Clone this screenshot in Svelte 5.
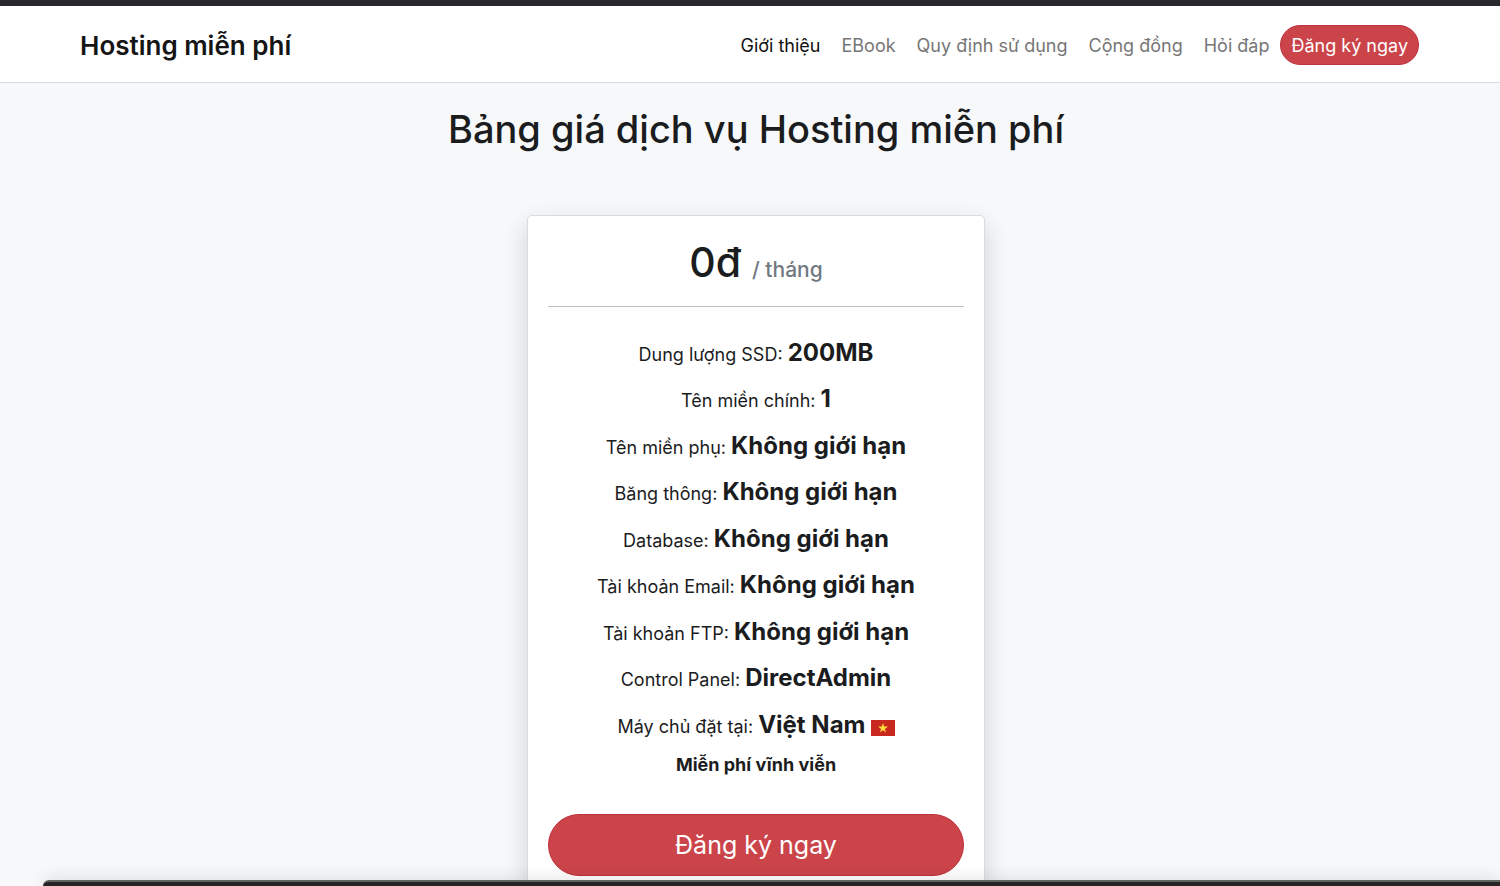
<script lang="ts">
  interface NavLink {
    label: string;
    href: string;
    active?: boolean;
  }

  interface Feature {
    label: string;
    value: string;
    flag?: boolean;
  }

  const links: NavLink[] = [
    { label: 'Giới thiệu', href: '#gioi-thieu', active: true },
    { label: 'EBook', href: '#ebook' },
    { label: 'Quy định sử dụng', href: '#quy-dinh' },
    { label: 'Cộng đồng', href: '#cong-dong' },
    { label: 'Hỏi đáp', href: '#hoi-dap' },
  ];

  const features: Feature[] = [
    { label: 'Dung lượng SSD', value: '200MB' },
    { label: 'Tên miền chính', value: '1' },
    { label: 'Tên miền phụ', value: 'Không giới hạn' },
    { label: 'Băng thông', value: 'Không giới hạn' },
    { label: 'Database', value: 'Không giới hạn' },
    { label: 'Tài khoản Email', value: 'Không giới hạn' },
    { label: 'Tài khoản FTP', value: 'Không giới hạn' },
    { label: 'Control Panel', value: 'DirectAdmin' },
    { label: 'Máy chủ đặt tại', value: 'Việt Nam', flag: true },
  ];
</script>

<div class="page">
  <header class="navbar">
    <a class="brand" href="#top">Hosting miễn phí</a>
    <nav class="nav">
      {#each links as link}
        <a class="nav-link" class:active={link.active} href={link.href}>{link.label}</a>
      {/each}
      <button class="btn">Đăng ký ngay</button>
    </nav>
  </header>

  <main class="pricing">
    <h1>Bảng giá dịch vụ Hosting miễn phí</h1>
    <section class="card">
      <h2 class="price">0đ <small>/ tháng</small></h2>
      <hr />
      <ul class="features">
        {#each features as f}
          <li>
            {f.label}: <strong>{f.value}</strong>
            {#if f.flag}
              <svg class="flag" viewBox="0 0 24 16" aria-hidden="true">
                <rect width="24" height="16" fill="#c8281e" />
                <path d="M12 3l1.2 3.6H17l-3.1 2.3 1.2 3.7-3.1-2.3-3.1 2.3 1.2-3.7L7 6.6h3.8z" fill="#ffd93b" />
              </svg>
            {/if}
          </li>
        {/each}
      </ul>
      <p class="forever">Miễn phí vĩnh viễn</p>
      <button class="btn btn-lg">Đăng ký ngay</button>
    </section>
  </main>

  <div class="dock"></div>
</div>

<style>
  :global(body) { margin: 0; }
  .page {
    box-sizing: border-box;
    height: 100vh;
    overflow: hidden;
    background: #f7f8fa;
    border-top: 6px solid #29282d;
    color: #1b1c1e;
    font-family: Inter, "Noto Sans", sans-serif;
    font-size: 18px;
  }
  .navbar {
    display: flex;
    align-items: center;
    justify-content: space-between;
    height: 74px;
    padding: 2px 81px 0 80px;
    background: #fff;
    border-bottom: 1px solid #d8dbdf;
  }
  .brand { color: #151515; font-size: 26px; font-weight: 600; text-decoration: none; }
  .nav { display: flex; align-items: center; }
  .nav-link { margin-right: 21px; color: #767676; text-decoration: none; }
  .nav-link.active { color: #111; }
  .nav-link:last-of-type { margin-right: 11px; }
  .btn {
    height: 40px;
    padding: 0 10px;
    background: #cb444a;
    border: 1px solid #c0323f;
    border-radius: 32px;
    color: #fff;
    font-family: inherit;
    font-size: 18px;
    cursor: pointer;
  }
  .pricing {
    display: flex;
    flex-direction: column;
    align-items: center;
    padding: 16px 0 0 12px;
  }
  h1 { margin: 0 0 56px; font-size: 38px; font-weight: 500; line-height: 60px; }
  .card {
    box-sizing: border-box;
    width: 458px;
    padding: 21px 20px;
    background: #fff;
    border: 1px solid #dadbdd;
    border-radius: 5px;
    box-shadow: 0 10px 24px rgba(0, 0, 0, 0.16);
    text-align: center;
  }
  .price { margin: 0; font-size: 41px; font-weight: 500; line-height: 50px; }
  .price small { color: #717981; font-size: 21px; }
  hr { margin: 11px 0 25px; border: 0; border-top: 1px solid #bfbfbf; }
  .features {
    display: grid;
    grid-auto-rows: 1fr;
    height: 418px;
    margin: 0;
    padding: 0;
    list-style: none;
    line-height: 42px;
  }
  .features strong { font-size: 24px; font-weight: 700; }
  .flag { width: 24px; height: 16px; vertical-align: -3px; }
  .forever { margin: 0 0 34px; font-weight: 700; line-height: 30px; }
  .btn-lg { width: 100%; height: 62px; font-size: 25px; }
  /* edge of the window that overlaps the bottom of the page */
  .dock {
    position: fixed;
    right: 0;
    bottom: 0;
    left: 43px;
    height: 4px;
    background: #262425;
    border-top: 2px solid #606463;
    border-top-left-radius: 8px;
    box-shadow: 0 0 16px rgba(0, 0, 0, 0.2);
  }
</style>
